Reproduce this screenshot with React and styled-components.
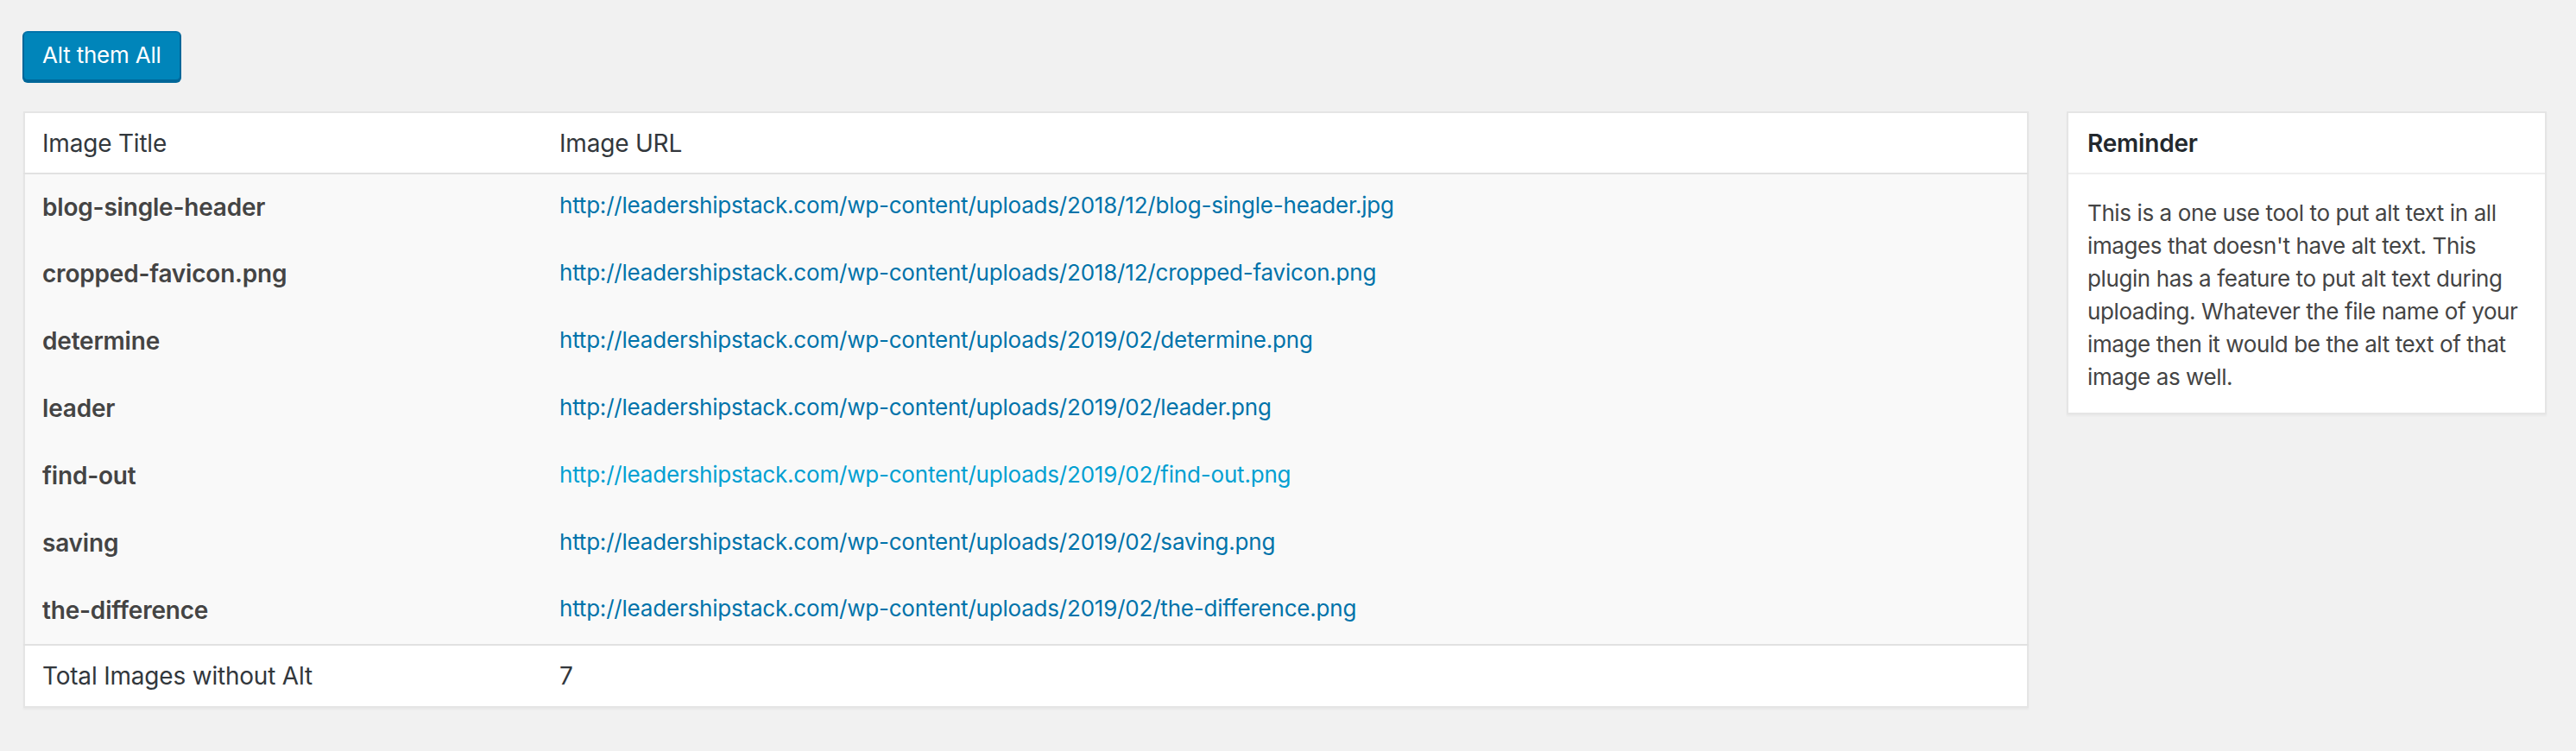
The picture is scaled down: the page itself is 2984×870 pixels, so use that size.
import React from 'react';
import styled, { createGlobalStyle } from 'styled-components';

const images = [
	{ title: 'blog-single-header', url: 'http://leadershipstack.com/wp-content/uploads/2018/12/blog-single-header.jpg' },
	{ title: 'cropped-favicon.png', url: 'http://leadershipstack.com/wp-content/uploads/2018/12/cropped-favicon.png' },
	{ title: 'determine', url: 'http://leadershipstack.com/wp-content/uploads/2019/02/determine.png' },
	{ title: 'leader', url: 'http://leadershipstack.com/wp-content/uploads/2019/02/leader.png' },
	{ title: 'find-out', url: 'http://leadershipstack.com/wp-content/uploads/2019/02/find-out.png', hover: true },
	{ title: 'saving', url: 'http://leadershipstack.com/wp-content/uploads/2019/02/saving.png' },
	{ title: 'the-difference', url: 'http://leadershipstack.com/wp-content/uploads/2019/02/the-difference.png' },
];

const App = () => {
	return (
		<>
			<GlobalStyle />
			<Wrap>
				<Button type="button">Alt them All</Button>
				<Columns>
					<Table>
						<thead>
							<tr>
								<Th first>Image Title</Th>
								<Th>Image URL</Th>
							</tr>
						</thead>
						<tbody>
							{images.map((img) => (
								<BodyRow key={img.title}>
									<TitleCell>{img.title}</TitleCell>
									<UrlCell>
										<UrlLink href={img.url} hover={img.hover ? 1 : 0} onClick={(e) => e.preventDefault()}>
											{img.url}
										</UrlLink>
									</UrlCell>
								</BodyRow>
							))}
						</tbody>
						<tfoot>
							<tr>
								<FootCell>Total Images without Alt</FootCell>
								<FootCell>7</FootCell>
							</tr>
						</tfoot>
					</Table>
					<Sidebar>
						<BoxTitle>Reminder</BoxTitle>
						<BoxInside>
							This is a one use tool to put alt text in all images that doesn't have alt text. This
							plugin has a feature to put alt text during uploading. Whatever the file name of your
							image then it would be the alt text of that image as well.
						</BoxInside>
					</Sidebar>
				</Columns>
			</Wrap>
		</>
	);
};

const GlobalStyle = createGlobalStyle`
	html, body {
		margin: 0;
		padding: 0;
		background: #f1f1f1;
	}
	body {
		font-family: Inter, 'Noto Sans', sans-serif;
		letter-spacing: -0.2px;
		color: #444;
	}
`;

const Wrap = styled.div`
	padding: 36px 34px 40px 27px;
`;

const Button = styled.button`
	display: block;
	height: 58px;
	margin-left: -1px;
	padding: 0 21px 2px;
	background: #0085ba;
	border: 2px solid #0073aa;
	border-color: #0073aa #006799 #006799;
	border-radius: 6px;
	box-shadow: 0 2px 0 #006799;
	color: #fff;
	font-family: Inter, sans-serif;
	font-size: 26px;
	letter-spacing: -0.2px;
	line-height: 52px;
	cursor: pointer;
`;

const Columns = styled.div`
	display: flex;
	align-items: flex-start;
	gap: 44px;
	margin-top: 35px;
`;

const Table = styled.table`
	flex: 1;
	border-collapse: collapse;
	border: 2px solid #e5e5e5;
	background: #fff;
	box-shadow: 0 2px 2px rgba(0, 0, 0, 0.04);
`;

const Th = styled.th`
	box-sizing: border-box;
	width: ${(p) => (p.first ? '600px' : 'auto')};
	height: 71px;
	padding: 0 20px;
	border-bottom: 2px solid #e1e1e1;
	text-align: left;
	font-size: 28px;
	font-weight: 400;
	color: #32373c;
`;

const BodyRow = styled.tr`
	background: #f9f9f9;
	height: 78px;
`;

const TitleCell = styled.td`
	padding: 0 20px 2px;
	font-size: 28px;
	font-weight: 600;
	color: #444;
`;

const UrlCell = styled.td`
	padding: 0 20px 6px;
	font-size: 26px;
`;

const UrlLink = styled.a`
	color: ${(p) => (p.hover ? '#00a0d2' : '#0073aa')};
	text-decoration: none;
`;

const FootCell = styled.td`
	height: 70px;
	padding: 0 20px;
	border-top: 2px solid #e1e1e1;
	font-size: 28px;
	color: #32373c;
`;

const Sidebar = styled.div`
	width: 556px;
	box-sizing: border-box;
	background: #fff;
	border: 2px solid #e5e5e5;
	box-shadow: 0 2px 2px rgba(0, 0, 0, 0.04);
`;

const BoxTitle = styled.h2`
	margin: 0;
	height: 69px;
	padding: 0 22px;
	display: flex;
	align-items: center;
	border-bottom: 2px solid #eee;
	font-size: 28px;
	font-weight: 600;
	color: #23282d;
`;

const BoxInside = styled.p`
	margin: 0;
	padding: 26px 20px 22px 22px;
	font-size: 26px;
	letter-spacing: -0.4px;
	line-height: 38px;
	color: #444;
`;

export default App;
